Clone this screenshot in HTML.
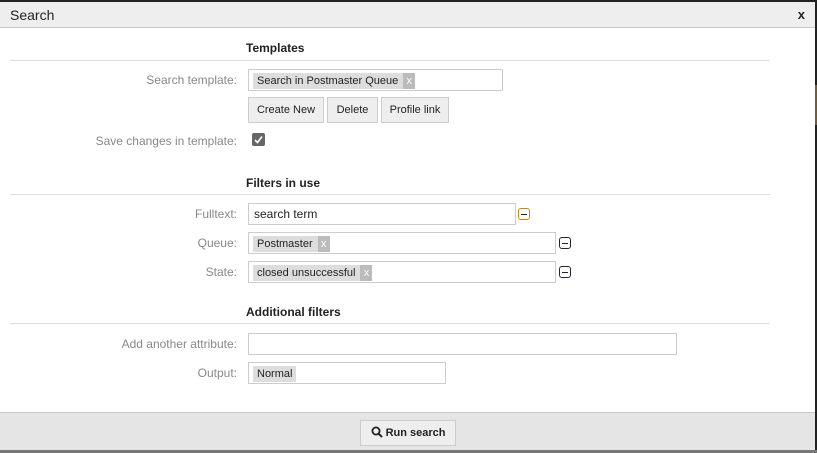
<!DOCTYPE html><html><head><style>
*{box-sizing:border-box;margin:0;padding:0}
body{width:817px;height:453px;background:#222;font-family:"Liberation Sans",Arial,sans-serif;font-size:12px;position:relative;overflow:hidden}
.d{position:absolute;left:0;top:2px;width:815px;height:449px;background:#fff}
.a{position:absolute}
.hd{left:0;top:0;width:815px;height:26px;background:#eee;border-bottom:1px solid #ccc;font-size:14px;color:#222;padding:5px 10px}
.h{font-weight:bold;color:#222;width:120px}
.hr{left:10px;width:760px;height:1px;background:#ddd}
.l{right:578px;color:#888;text-align:right;white-space:nowrap}
.in{border:1px solid #ccc;background:#fff;height:22px}
.tag{position:absolute;top:3px;left:4px;height:16px;background:#ddd;color:#222;font-size:11px;line-height:16px;padding-left:4px;padding-right:17px}
.tag.x:after{content:"x";position:absolute;right:0;top:0;width:12px;height:16px;background:#bbb;color:#fff;text-align:center}
.tag.n{padding-right:4px}
.b{border:1px solid #ccc;background:#eee;height:26px;line-height:24px;text-align:center;color:#222;font-size:11px}
.m{width:12px;height:12px;border:1px solid #223;border-radius:3px}
.m:after{content:"";position:absolute;left:2px;right:2px;top:4.5px;height:1px;background:#223}
</style></head><body>
<div class="d">
<div class="a hd">Search<span style="position:absolute;right:10px;top:5px;font-weight:bold;font-size:13px">x</span></div>
<div class="a h" style="left:246px;top:39px">Templates</div>
<div class="a hr" style="top:58px"></div>
<div class="a l" style="top:71px">Search template:</div>
<div class="a in" style="left:248px;top:67px;width:255px"><span class="tag x">Search in Postmaster Queue</span></div>
<div class="a b" style="left:248px;top:95px;width:76px">Create New</div>
<div class="a b" style="left:327px;top:95px;width:51px">Delete</div>
<div class="a b" style="left:381px;top:95px;width:68px">Profile link</div>
<div class="a l" style="top:132px">Save changes in template:</div>
<div class="a" style="left:252px;top:131px;width:13px;height:13px;background:#666;border-radius:2px"><svg width="13" height="13" viewBox="0 0 13 13"><path d="M3 7L5.5 9.5L10 3.5" fill="none" stroke="#fff" stroke-width="1.6"/></svg></div>
<div class="a h" style="left:246px;top:174px">Filters in use</div>
<div class="a hr" style="top:192px"></div>
<div class="a l" style="top:205px">Fulltext:</div>
<div class="a in" style="left:248px;top:201px;width:268px;padding:3px 5px;color:#222">search term</div>
<div class="a m" style="left:518px;top:206px;border-color:#c80"></div>
<div class="a l" style="top:234px">Queue:</div>
<div class="a in" style="left:248px;top:230px;width:308px"><span class="tag x">Postmaster</span></div>
<div class="a m" style="left:559px;top:235px"></div>
<div class="a l" style="top:263px">State:</div>
<div class="a in" style="left:248px;top:259px;width:308px"><span class="tag x">closed unsuccessful</span></div>
<div class="a m" style="left:559px;top:264px"></div>
<div class="a h" style="left:246px;top:303px">Additional filters</div>
<div class="a hr" style="top:321px"></div>
<div class="a l" style="top:335px">Add another attribute:</div>
<div class="a in" style="left:248px;top:331px;width:429px"></div>
<div class="a l" style="top:364px">Output:</div>
<div class="a in" style="left:248px;top:360px;width:198px"><span class="tag n">Normal</span></div>
<div class="a" style="left:0;top:410px;width:815px;height:39px;background:#e5e5e5;border-top:1px solid #c8c8c8"></div>
<div class="a b" style="left:360px;top:418px;width:96px;font-weight:bold;background:#eee">
<svg width="12" height="12" viewBox="0 0 12 12" style="vertical-align:-2px"><circle cx="5" cy="5" r="3.6" fill="none" stroke="#222" stroke-width="1.8"/><path d="M7.5 7.5L11 11" stroke="#222" stroke-width="2"/></svg> Run search</div>
</div>
<div class="a" style="left:815px;top:85px;width:2px;height:40px;background:#7a5a28"></div>
<div class="a" style="left:0;top:450px;width:817px;height:3px;background:#777"></div>
</body></html>
